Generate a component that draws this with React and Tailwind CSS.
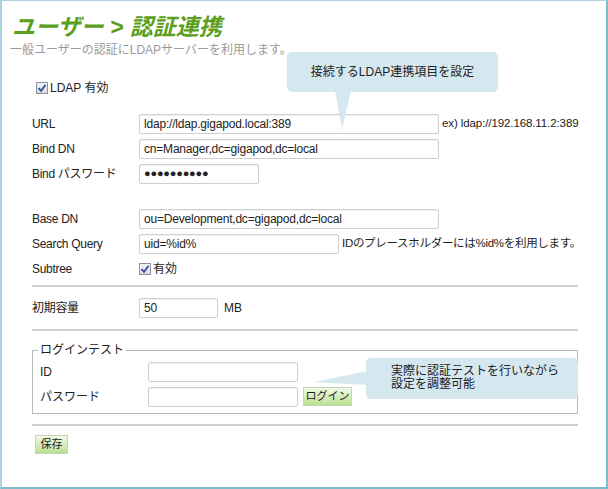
import React from 'react';

const font = { fontFamily: '"Liberation Sans", "Noto Sans CJK JP", sans-serif' };

const Check = () => (
  <span className="shrink-0 inline-flex items-center justify-center w-[12px] h-[12px] border border-[#8f8f9d] bg-gradient-to-b from-[#f4f4f4] to-[#dcdcdc] mr-[2px]">
    <svg width="10" height="10" viewBox="0 0 10 10">
      <path d="M1.5 5.2 L4 7.8 L8.6 1.8" fill="none" stroke="#2d4fa8" strokeWidth="1.8" />
    </svg>
  </span>
);

const Field = ({ value, w, className = '' }) => (
  <div
    className={`shrink-0 h-[20px] border border-[#cfcfcf] rounded-[2px] bg-white shadow-[inset_0_1px_1px_rgba(0,0,0,0.06)] px-[4px] flex items-center whitespace-nowrap overflow-hidden text-[12px] text-[#222] tracking-[-0.2px] ${className}`}
    style={{ width: w }}
  >
    {value}
  </div>
);

const Row = ({ label, children, className = '' }) => (
  <div className={`flex items-center h-[25px] whitespace-nowrap ${className}`}>
    <div className="shrink-0 w-[107px] text-[12px] text-[#222] tracking-[-0.3px]">{label}</div>
    {children}
  </div>
);

const GreenButton = ({ children, className = '' }) => (
  <div
    className={`h-[19px] px-[5px] flex items-center justify-center whitespace-nowrap border border-[#c7d3b8] bg-gradient-to-b from-[#f3fae8] to-[#b9df8f] text-[11px] text-[#222] ${className}`}
  >
    {children}
  </div>
);

export default function App() {
  return (
    <div
      style={font}
      className="relative w-[608px] h-[489px] bg-white border-l-2 border-t border-r-2 border-b-2 border-l-[#a9d5e1] border-t-[#a9d5e1] border-r-[#7cbccb] border-b-[#7cbccb] overflow-hidden"
    >
      <div className="pl-[8px] pt-[12px]">
        <h1 className="text-[23px] leading-[28px] italic font-bold text-[#5c9f1c] pl-[2px]">
          ユーザー &gt; 認証連携
        </h1>
        <p className="text-[12px] leading-[14px] text-[#9a9a9a] mt-[2px]">
          一般ユーザーの認証にLDAPサーバーを利用します。
        </p>
      </div>

      <div className="pl-[34px] mt-[22px] flex items-center text-[12px] text-[#222]">
        <Check />
        LDAP 有効
      </div>

      <div className="pl-[30px] mt-[14px] pr-[28px]">
        <Row label="URL">
          <Field value="ldap://ldap.gigapod.local:389" w="300px" />
          <span className="ml-[3px] text-[11.5px] text-[#222] tracking-[-0.1px]">ex) ldap://192.168.11.2:389</span>
        </Row>
        <Row label="Bind DN">
          <Field value="cn=Manager,dc=gigapod,dc=local" w="300px" />
        </Row>
        <Row label="Bind パスワード">
          <Field value={<span className="text-[11px] font-bold">●●●●●●●●●●</span>} w="120px" />
        </Row>
        <Row label="Base DN" className="mt-[20px]">
          <Field value="ou=Development,dc=gigapod,dc=local" w="300px" />
        </Row>
        <Row label="Search Query">
          <Field value="uid=%id%" w="200px" />
          <span className="ml-[3px] text-[11.5px] text-[#222] tracking-[-0.3px]">IDのプレースホルダーには%id%を利用します。</span>
        </Row>
        <Row label="Subtree">
          <Check />
          <span className="text-[12px] text-[#222]">有効</span>
        </Row>

        <div className="mt-[4px] border-t-2 border-[#d0d0d0]" />

        <Row label="初期容量" className="mt-[7px] h-[28px]">
          <Field value="50" w="79px" />
          <span className="ml-[6px] text-[12px] text-[#222]">MB</span>
        </Row>

        <div className="mt-[7px] border-t-2 border-[#d0d0d0]" />

        <fieldset className="mt-[10px] border border-[#b8b8b8] pl-[7px] pb-[4px] pt-[0px]">
          <legend className="text-[12px] text-[#222] px-[2px] ml-[-2px]">ログインテスト</legend>
          <div className="flex items-center h-[25px]">
            <div className="w-[108px] text-[12px] text-[#222]">ID</div>
            <Field value="" w="150px" />
          </div>
          <div className="flex items-center h-[25px]">
            <div className="w-[108px] text-[12px] text-[#222]">パスワード</div>
            <Field value="" w="150px" />
            <GreenButton className="ml-[5px] w-[49px]">ログイン</GreenButton>
          </div>
        </fieldset>

        <div className="mt-[10px] border-t-2 border-[#d0d0d0]" />

        <GreenButton className="mt-[9px] ml-[3px] w-[33px] px-0">保存</GreenButton>
      </div>

      {/* callout 1 */}
      <div className="absolute left-[285px] top-[51px] w-[211px] h-[40px] rounded-[5px] bg-[#d5e8f0] flex items-center justify-center text-[12px] text-[#222]">
        接続するLDAP連携項目を設定
      </div>
      <svg className="absolute left-[333px] top-[90px]" width="20" height="40" viewBox="0 0 20 40">
        <polygon points="0,0 16,0 7,38" fill="#d5e8f0" />
      </svg>

      {/* callout 2 */}
      <div className="absolute left-[364px] top-[357px] w-[212px] h-[41px] rounded-[5px] bg-[#d5e8f0] text-[12px] leading-[13px] text-[#222] pl-[25px] pt-[7px]">
        実際に認証テストを行いながら
        <br />
        設定を調整可能
      </div>
      <svg className="absolute left-[312px] top-[370px]" width="54" height="22" viewBox="0 0 54 22">
        <polygon points="54,0 54,14 0,11" fill="#d5e8f0" />
      </svg>
    </div>
  );
}
